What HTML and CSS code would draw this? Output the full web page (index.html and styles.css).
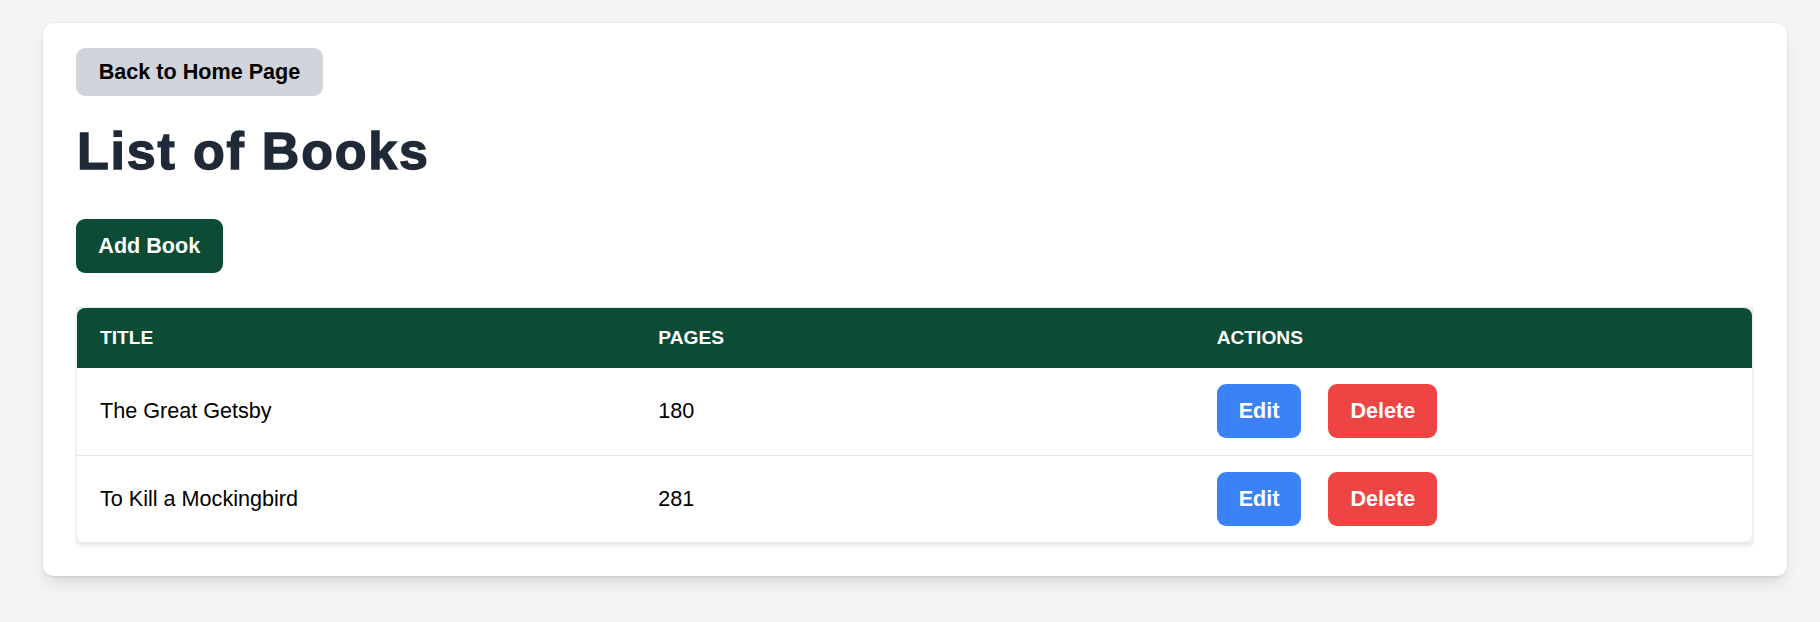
FILE: index.html
```html
<!DOCTYPE html>
<html lang="en">
<head>
<meta charset="utf-8">
<title>List of Books</title>
<link rel="stylesheet" href="styles.css">
</head>
<body>
<main class="card">
  <button class="btn btn-back">Back to Home Page</button>
  <h1 class="title">List of Books</h1>
  <button class="btn btn-add">Add Book</button>
  <div class="table-wrap">
    <table class="books">
      <thead>
        <tr>
          <th>Title</th>
          <th>Pages</th>
          <th>Actions</th>
        </tr>
      </thead>
      <tbody>
        <tr>
          <td>The Great Getsby</td>
          <td>180</td>
          <td><div class="actions"><button class="btn btn-edit">Edit</button><button class="btn btn-delete">Delete</button></div></td>
        </tr>
        <tr>
          <td>To Kill a Mockingbird</td>
          <td>281</td>
          <td><div class="actions"><button class="btn btn-edit">Edit</button><button class="btn btn-delete">Delete</button></div></td>
        </tr>
      </tbody>
    </table>
  </div>
</main>
</body>
</html>
```
FILE: styles.css
```css
html, body {
  margin: 0;
  padding: 0;
}
body {
  background: #f3f4f6;
  font-family: "Liberation Sans", Arial, sans-serif;
  padding: 23px 33px 46px 43px;
}
.card {
  background: #ffffff;
  border-radius: 10px;
  box-shadow: 0 0 0 1px rgba(0, 0, 0, 0.03), 0 10px 15px -3px rgba(0, 0, 0, 0.1), 0 4px 6px -4px rgba(0, 0, 0, 0.1);
  padding: 25px 34px 33px 33px;
  display: flex;
  flex-direction: column;
  align-items: flex-start;
}
.btn {
  border: 0;
  font-family: "Liberation Sans", Arial, sans-serif;
  font-weight: 700;
  font-size: 21.6px;
  line-height: 33.6px;
  border-radius: 9px;
  padding: 10px 22px;
  cursor: pointer;
  color: #ffffff;
}
.btn-back {
  background: #d1d5db;
  color: #000000;
  padding: 7px 22.7px;
}
.title {
  margin: 25px 0 0 1px;
  font-size: 52px;
  line-height: 61.2px;
  font-weight: 700;
  letter-spacing: 1.8px;
  color: #1f2937;
  -webkit-text-stroke: 1.4px #1f2937;
}
.btn-add {
  margin-top: 37.5px;
  background: #0c4c36;
  padding: 10px 22.3px;
}
.table-wrap {
  align-self: stretch;
  margin-top: 34px;
  background: #f1f2f4;
  border: 1px solid #e8e9ec;
  box-shadow: 0 4px 6px -1px rgba(0, 0, 0, 0.08), 0 2px 4px -2px rgba(0, 0, 0, 0.08);
}
.books {
  width: 100%;
  border-collapse: separate;
  border-spacing: 0;
  table-layout: fixed;
  background: #ffffff;
  border-radius: 8px;
  overflow: hidden;
}
.books th {
  background: #0c4c36;
  color: #ffffff;
  text-transform: uppercase;
  text-align: left;
  font-size: 19.2px;
  font-weight: 700;
  height: 60px;
  padding: 0 23px;
}
.books td {
  font-size: 21.6px;
  color: #000000;
  padding: 16.6px 23px;
  vertical-align: middle;
  border-top: 1px solid #e5e7eb;
}
.books tbody tr:first-child td {
  border-top: 0;
}
.actions {
  display: flex;
  gap: 27px;
}
.btn-edit {
  background: #3b82f6;
}
.btn-delete {
  background: #ef4444;
}
```
